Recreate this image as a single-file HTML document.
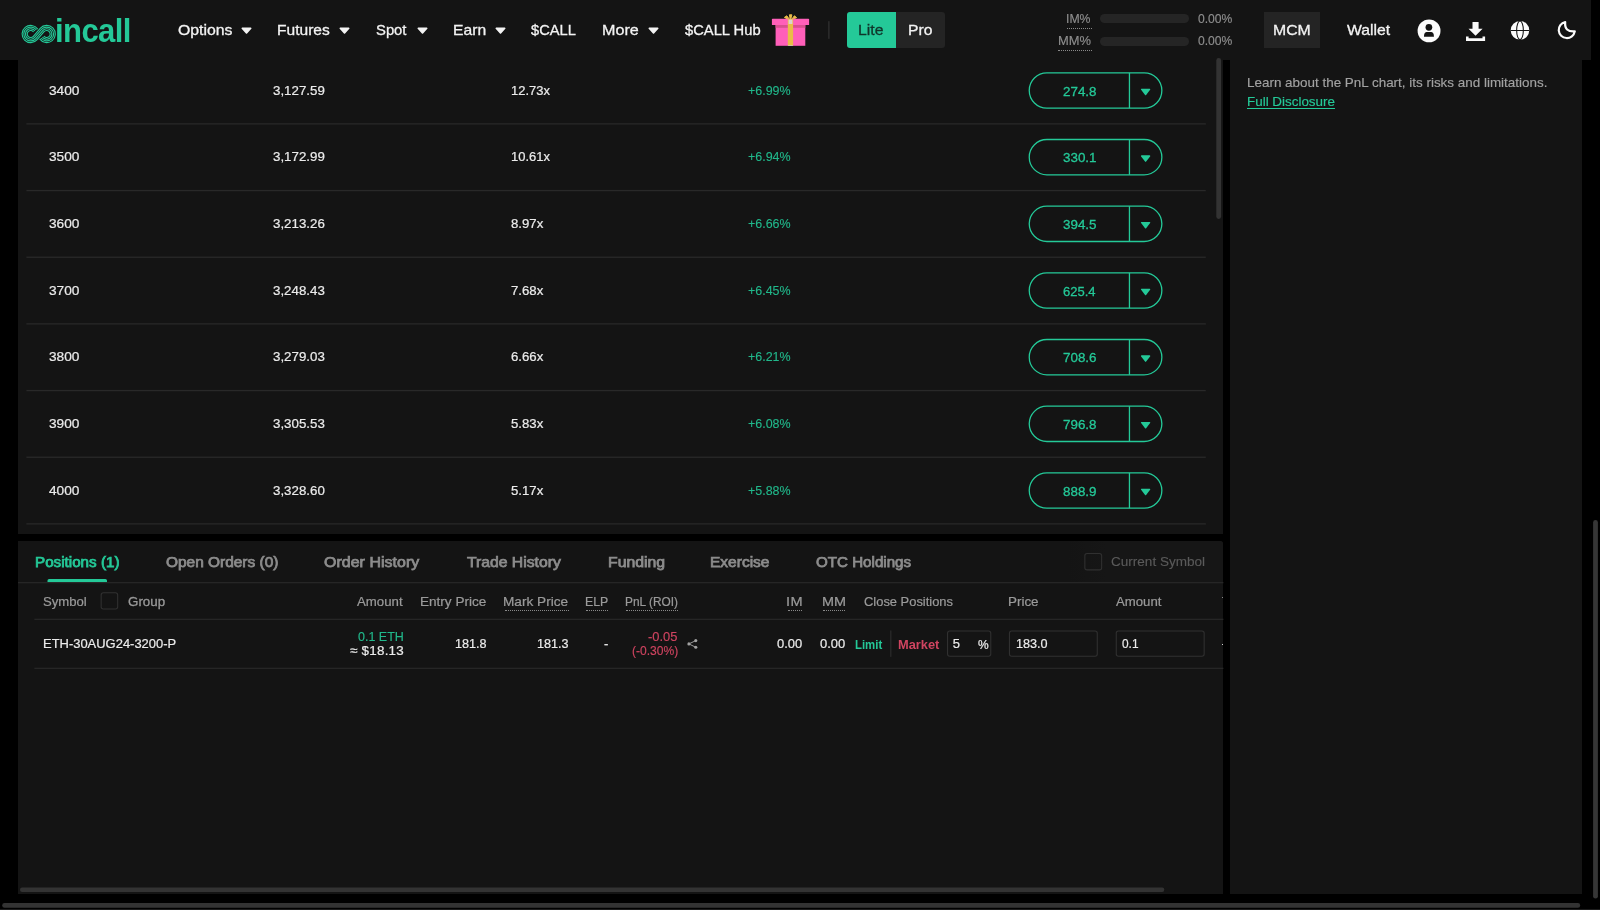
<!DOCTYPE html>
<html lang="en">
<head>
<meta charset="utf-8">
<title>Coincall</title>
<style>
*{box-sizing:border-box;margin:0;padding:0}
html,body{width:1600px;height:910px;overflow:hidden;background:#000}
body{position:relative;font-family:"Liberation Sans",sans-serif}
.a{position:absolute}
.t{position:absolute;white-space:nowrap;height:20px;line-height:20px;font-family:"Liberation Sans",sans-serif}
.p{position:absolute;background:#141414}
.tri{position:absolute;width:11px;height:7px}
.dot{position:absolute;height:0;border-top:1px dotted #8a8a8a}
</style>
</head>
<body>
<div class="p" style="left:0;top:0;width:1591.4px;height:59.8px"></div>
<div class="p" style="left:18px;top:59.8px;width:1205.4px;height:474.2px"></div>
<div class="p" style="left:18px;top:541px;width:1205.4px;height:352.8px;border-radius:0 3px 0 0"></div>
<div class="p" style="left:1230.2px;top:59.8px;width:351.8px;height:834px"></div>
<div class="a" style="left:1068px;top:541px;width:155.4px;height:41.5px;border-radius:0 3px 0 0;background:linear-gradient(90deg,#141414,#161616 25%)"></div>
<svg class="a" style="left:18px;top:20px" width="42" height="28" viewBox="0 0 42 28" fill="none" stroke="#24c998" stroke-width="1.12"><path d="M15.57 11.99A3.50 3.50 0 1 0 15.35 16.29L22.20 8.37A8.60 8.60 0 1 1 21.66 18.93"/><path d="M16.96 11.02A5.20 5.20 0 1 0 16.63 17.40L23.48 9.49A6.90 6.90 0 1 1 23.05 17.96"/><path d="M18.35 10.04A6.90 6.90 0 1 0 17.92 18.51L24.77 10.60A5.20 5.20 0 1 1 24.44 16.98"/><path d="M19.74 9.07A8.60 8.60 0 1 0 19.20 19.63L26.05 11.71A3.50 3.50 0 1 1 25.83 16.01"/></svg>
<svg class="tri" style="left:240.8px;top:27px" viewBox="0 0 11 7"><path d="M1.2 .5h8.6a.7.7 0 0 1 .55 1.15L6.1 6.5a.8.8 0 0 1-1.2 0L.65 1.65A.7.7 0 0 1 1.2.5z" fill="#f3f3f3"/></svg>
<svg class="tri" style="left:338.6px;top:27px" viewBox="0 0 11 7"><path d="M1.2 .5h8.6a.7.7 0 0 1 .55 1.15L6.1 6.5a.8.8 0 0 1-1.2 0L.65 1.65A.7.7 0 0 1 1.2.5z" fill="#f3f3f3"/></svg>
<svg class="tri" style="left:417px;top:27px" viewBox="0 0 11 7"><path d="M1.2 .5h8.6a.7.7 0 0 1 .55 1.15L6.1 6.5a.8.8 0 0 1-1.2 0L.65 1.65A.7.7 0 0 1 1.2.5z" fill="#f3f3f3"/></svg>
<svg class="tri" style="left:495.3px;top:27px" viewBox="0 0 11 7"><path d="M1.2 .5h8.6a.7.7 0 0 1 .55 1.15L6.1 6.5a.8.8 0 0 1-1.2 0L.65 1.65A.7.7 0 0 1 1.2.5z" fill="#f3f3f3"/></svg>
<svg class="tri" style="left:647.6px;top:27px" viewBox="0 0 11 7"><path d="M1.2 .5h8.6a.7.7 0 0 1 .55 1.15L6.1 6.5a.8.8 0 0 1-1.2 0L.65 1.65A.7.7 0 0 1 1.2.5z" fill="#f3f3f3"/></svg>
<svg class="a" style="left:770px;top:12px" width="41" height="36" viewBox="0 0 41 36">
<path d="M20.2 8.4 L14.4 5.4 L16.8 3.8 Z M20.4 8.4 L19.4 2.8 L21.9 2.8 Z M20.8 8.4 L24.4 3.8 L26.6 5.6 Z" fill="#e9bd48" stroke="#e9bd48" stroke-width="1" stroke-linejoin="round"/>
<rect x="5.6" y="13" width="29.7" height="20.8" fill="#ff5fb9"/>
<rect x="5.6" y="13" width="29.7" height="2.8" fill="#d8508f"/>
<rect x="1.9" y="6.8" width="37.2" height="6.3" rx=".6" fill="#ff5fb9"/>
<rect x="17.8" y="6.8" width="5.3" height="27" fill="#e9bd48"/>
<rect x="18.6" y="7.6" width="3.8" height="4.4" fill="#d9d3cf"/>
<rect x="18.2" y="33" width="4.6" height="1" fill="#cfc3a0"/>
</svg>
<div class="a" style="left:846.9px;top:11.9px;width:98.2px;height:35.9px;border-radius:3px;background:#242424;overflow:hidden"><div style="width:49.2px;height:100%;background:#24c998"></div></div>
<div class="a" style="left:1099.7px;top:14.4px;width:89.2px;height:9px;border-radius:5px;background:#252525"></div>
<div class="a" style="left:1099.7px;top:36.8px;width:89.2px;height:9px;border-radius:5px;background:#252525"></div>
<div class="dot" style="left:1066.5px;top:28px;width:25px"></div>
<div class="dot" style="left:1058px;top:50px;width:33.5px"></div>
<div class="a" style="left:1264.3px;top:12.1px;width:55.7px;height:35.7px;background:#242424"></div>
<svg class="a" style="left:1417px;top:19px" width="24" height="24" viewBox="0 0 24 24"><circle cx="12.05" cy="11.9" r="11.45" fill="#fcfcfc"/><circle cx="11.9" cy="8.3" r="3.35" fill="#141414"/><path d="M7 17.8v-.9c0-2.2 1.3-3.8 2.7-3.8h4.5c1.4 0 2.7 1.6 2.7 3.8v.9z" fill="#141414"/></svg>
<svg class="a" style="left:1465px;top:21px" width="21" height="21" viewBox="0 0 21 21" fill="#fbfbfb"><path d="M7.5 .9h6.1v6.8h4L10.55 14.7 3.5 7.7h4z"/><path d="M1 15.4h2.6v1.8h13.9v-1.8h2.6V20H1z"/></svg>
<svg class="a" style="left:1510px;top:20px" width="20" height="21" viewBox="0 0 20 21"><circle cx="10" cy="10.3" r="9.3" fill="#fcfcfc"/><g fill="none" stroke="#141414"><path d="M.5 10.5h19" stroke-width="1"/><ellipse cx="10" cy="10.3" rx="3.35" ry="9.3" stroke-width="1.05"/></g></svg>
<svg class="a" style="left:1556px;top:20px" width="22" height="21" viewBox="0 0 22 21"><path d="M9.2 2Q8.2 12.2 18.8 11.4A8.1 8.1 0 1 1 9.2 2z" fill="none" stroke="#fcfcfc" stroke-width="2.2" stroke-linejoin="round"/></svg>
<svg class="a" style="left:0;top:0" width="1600" height="910" viewBox="0 0 1600 910"><rect x="26.4" y="123.25" width="1179.4" height="1.3" fill="#292929"/><rect x="1029.25" y="72.85" width="132.6" height="35.3" rx="17.65" fill="none" stroke="#24c998" stroke-width="1.3"/><rect x="1128.8" y="72.85" width="1.3" height="35.3" fill="#24c998"/><path transform="translate(1140.6 88.35)" d="M1 .3h8a.65.65 0 0 1 .5 1.1L5.55 6.6a.75.75 0 0 1-1.1 0L.5 1.4A.65.65 0 0 1 1 .3z" fill="#24c998"/><rect x="26.4" y="189.92" width="1179.4" height="1.3" fill="#292929"/><rect x="1029.25" y="139.52" width="132.6" height="35.3" rx="17.65" fill="none" stroke="#24c998" stroke-width="1.3"/><rect x="1128.8" y="139.52" width="1.3" height="35.3" fill="#24c998"/><path transform="translate(1140.6 155.02)" d="M1 .3h8a.65.65 0 0 1 .5 1.1L5.55 6.6a.75.75 0 0 1-1.1 0L.5 1.4A.65.65 0 0 1 1 .3z" fill="#24c998"/><rect x="26.4" y="256.58" width="1179.4" height="1.3" fill="#292929"/><rect x="1029.25" y="206.18" width="132.6" height="35.3" rx="17.65" fill="none" stroke="#24c998" stroke-width="1.3"/><rect x="1128.8" y="206.18" width="1.3" height="35.3" fill="#24c998"/><path transform="translate(1140.6 221.68)" d="M1 .3h8a.65.65 0 0 1 .5 1.1L5.55 6.6a.75.75 0 0 1-1.1 0L.5 1.4A.65.65 0 0 1 1 .3z" fill="#24c998"/><rect x="26.4" y="323.25" width="1179.4" height="1.3" fill="#292929"/><rect x="1029.25" y="272.85" width="132.6" height="35.3" rx="17.65" fill="none" stroke="#24c998" stroke-width="1.3"/><rect x="1128.8" y="272.85" width="1.3" height="35.3" fill="#24c998"/><path transform="translate(1140.6 288.35)" d="M1 .3h8a.65.65 0 0 1 .5 1.1L5.55 6.6a.75.75 0 0 1-1.1 0L.5 1.4A.65.65 0 0 1 1 .3z" fill="#24c998"/><rect x="26.4" y="389.92" width="1179.4" height="1.3" fill="#292929"/><rect x="1029.25" y="339.52" width="132.6" height="35.3" rx="17.65" fill="none" stroke="#24c998" stroke-width="1.3"/><rect x="1128.8" y="339.52" width="1.3" height="35.3" fill="#24c998"/><path transform="translate(1140.6 355.02)" d="M1 .3h8a.65.65 0 0 1 .5 1.1L5.55 6.6a.75.75 0 0 1-1.1 0L.5 1.4A.65.65 0 0 1 1 .3z" fill="#24c998"/><rect x="26.4" y="456.58" width="1179.4" height="1.3" fill="#292929"/><rect x="1029.25" y="406.18" width="132.6" height="35.3" rx="17.65" fill="none" stroke="#24c998" stroke-width="1.3"/><rect x="1128.8" y="406.18" width="1.3" height="35.3" fill="#24c998"/><path transform="translate(1140.6 421.68)" d="M1 .3h8a.65.65 0 0 1 .5 1.1L5.55 6.6a.75.75 0 0 1-1.1 0L.5 1.4A.65.65 0 0 1 1 .3z" fill="#24c998"/><rect x="26.4" y="523.25" width="1179.4" height="1.3" fill="#292929"/><rect x="1029.25" y="472.85" width="132.6" height="35.3" rx="17.65" fill="none" stroke="#24c998" stroke-width="1.3"/><rect x="1128.8" y="472.85" width="1.3" height="35.3" fill="#24c998"/><path transform="translate(1140.6 488.35)" d="M1 .3h8a.65.65 0 0 1 .5 1.1L5.55 6.6a.75.75 0 0 1-1.1 0L.5 1.4A.65.65 0 0 1 1 .3z" fill="#24c998"/><rect x="1216.3" y="58" width="4.8" height="161" rx="2.4" fill="#333333"/><rect x="1593.1" y="520" width="4.8" height="378.6" rx="2.4" fill="#363636"/><rect x="20" y="887.6" width="1144.3" height="4.4" rx="2.2" fill="#333333"/><rect x="2.2" y="903.1" width="1578" height="4.7" rx="2.35" fill="#333333"/><rect x="0" y="909" width="1600" height="1" fill="#1c1c1c"/><path d="M47.5 582.2v-1.6a1.6 1.6 0 0 1 1.6-1.6h56.3a1.6 1.6 0 0 1 1.6 1.6v1.6z" fill="#24c998"/><rect x="18" y="582.1" width="1205.4" height="1.2" fill="#292929"/><rect x="34.4" y="618.7" width="1189" height="1.2" fill="#292929"/><rect x="34.4" y="667.7" width="1189" height="1.2" fill="#292929"/><rect x="1084.85" y="553.55" width="16.80" height="16.30" rx="2.2" fill="none" stroke="#303030" stroke-width="1.1"/><rect x="101.15" y="592.75" width="16.50" height="16.30" rx="2.2" fill="none" stroke="#303030" stroke-width="1.1"/><rect x="947.55" y="631.05" width="43.20" height="25.20" rx="2.2" fill="none" stroke="#303030" stroke-width="1.1"/><rect x="1009.45" y="631.05" width="87.80" height="25.20" rx="2.2" fill="none" stroke="#303030" stroke-width="1.1"/><rect x="1116.25" y="631.05" width="87.90" height="25.20" rx="2.2" fill="none" stroke="#303030" stroke-width="1.1"/><rect x="890.2" y="630.5" width="1.2" height="26.3" fill="#2c2c2c"/><rect x="828.2" y="21.2" width="1.3" height="17.6" fill="#303030"/></svg>
<div class="dot" style="left:504.5px;top:610.4px;width:64px"></div>
<div class="dot" style="left:586.3px;top:610.4px;width:22px"></div>
<div class="dot" style="left:625.8px;top:610.4px;width:52.5px"></div>
<div class="dot" style="left:787.5px;top:610.4px;width:14.5px"></div>
<div class="dot" style="left:823px;top:610.4px;width:22px"></div>
<svg class="a" style="left:687px;top:638px" width="12" height="12" viewBox="0 0 12 12"><g fill="#a2a2a2"><circle cx="8.8" cy="2.6" r="1.55"/><circle cx="8.8" cy="9.3" r="1.55"/><circle cx="1.9" cy="5.9" r="1.55"/></g><path d="M8.8 2.6 1.9 5.9 8.8 9.3" fill="none" stroke="#a2a2a2" stroke-width=".95"/></svg>
<div class="a" style="left:1221.6px;top:596.6px;width:1.8px;height:1.2px;background:#8a8a8a"></div>
<div class="a" style="left:1221.6px;top:643.6px;width:1.8px;height:1.2px;background:#cfcfcf"></div>
<div class="a" style="left:0;top:0;width:1600px;height:910px;will-change:transform">
<span class="t" style="left:55.04px;top:21.13px;font-size:33.4px;color:#24c998;letter-spacing:-0.627px;font-weight:700;transform:scaleX(0.93);transform-origin:0 0;">incall</span>
<span class="t" style="left:178.00px;top:20.10px;font-size:15px;color:#f3f3f3;-webkit-text-stroke:0.3px #f3f3f3;transform:scaleX(1.0548);transform-origin:0 0;">Options</span>
<span class="t" style="left:277.36px;top:20.10px;font-size:15px;color:#f3f3f3;-webkit-text-stroke:0.3px #f3f3f3;transform:scaleX(1.0374);transform-origin:0 0;">Futures</span>
<span class="t" style="left:376.00px;top:20.10px;font-size:15px;color:#f3f3f3;-webkit-text-stroke:0.3px #f3f3f3;transform:scaleX(0.9877);transform-origin:0 0;">Spot</span>
<span class="t" style="left:452.76px;top:20.10px;font-size:15px;color:#f3f3f3;-webkit-text-stroke:0.3px #f3f3f3;transform:scaleX(1.0447);transform-origin:0 0;">Earn</span>
<span class="t" style="left:531.30px;top:20.10px;font-size:15px;color:#f3f3f3;-webkit-text-stroke:0.3px #f3f3f3;transform:scaleX(0.9775);transform-origin:0 0;">$CALL</span>
<span class="t" style="left:601.92px;top:20.10px;font-size:15px;color:#f3f3f3;-webkit-text-stroke:0.3px #f3f3f3;transform:scaleX(1.0752);transform-origin:0 0;">More</span>
<span class="t" style="left:685.00px;top:20.10px;font-size:15px;color:#f3f3f3;-webkit-text-stroke:0.3px #f3f3f3;transform:scaleX(0.9818);transform-origin:0 0;">$CALL Hub</span>
<span class="t" style="left:858.45px;top:20.10px;font-size:15px;color:#10352a;-webkit-text-stroke:0.3px #10352a;transform:scaleX(1.0507);transform-origin:0 0;">Lite</span>
<span class="t" style="left:908.45px;top:20.10px;font-size:15px;color:#f3f3f3;-webkit-text-stroke:0.3px #f3f3f3;transform:scaleX(1.0455);transform-origin:0 0;">Pro</span>
<span class="t" style="left:1066.06px;top:9.30px;font-size:13px;color:#8e8e8e;-webkit-text-stroke:0.15px #8e8e8e;transform:scaleX(0.9434);transform-origin:0 0;">IM%</span>
<span class="t" style="left:1057.50px;top:30.90px;font-size:13px;color:#8e8e8e;-webkit-text-stroke:0.15px #8e8e8e;transform:scaleX(0.9952);transform-origin:0 0;">MM%</span>
<span class="t" style="left:1198.00px;top:9.30px;font-size:13px;color:#8e8e8e;-webkit-text-stroke:0.15px #8e8e8e;transform:scaleX(0.9329);transform-origin:0 0;">0.00%</span>
<span class="t" style="left:1198.00px;top:30.90px;font-size:13px;color:#8e8e8e;-webkit-text-stroke:0.15px #8e8e8e;transform:scaleX(0.9329);transform-origin:0 0;">0.00%</span>
<span class="t" style="left:1273.35px;top:20.20px;font-size:15px;color:#f3f3f3;-webkit-text-stroke:0.3px #f3f3f3;transform:scaleX(1.0545);transform-origin:0 0;">MCM</span>
<span class="t" style="left:1347.00px;top:20.20px;font-size:15px;color:#f3f3f3;-webkit-text-stroke:0.3px #f3f3f3;transform:scaleX(1.0489);transform-origin:0 0;">Wallet</span>
<span class="t" style="left:48.80px;top:80.72px;font-size:13.5px;color:#ebebeb;-webkit-text-stroke:0.22px #ebebeb;transform:scaleX(1.0127);transform-origin:0 0;">3400</span>
<span class="t" style="left:272.80px;top:80.72px;font-size:13.5px;color:#ebebeb;-webkit-text-stroke:0.22px #ebebeb;transform:scaleX(0.9857);transform-origin:0 0;">3,127.59</span>
<span class="t" style="left:511.04px;top:80.72px;font-size:13.5px;color:#ebebeb;-webkit-text-stroke:0.22px #ebebeb;transform:scaleX(0.9602);transform-origin:0 0;">12.73x</span>
<span class="t" style="left:748.40px;top:80.72px;font-size:13.5px;color:#21b88b;-webkit-text-stroke:0.12px #21b88b;transform:scaleX(0.9229);transform-origin:0 0;">+6.99%</span>
<span class="t" style="left:1063.00px;top:81.52px;font-size:13.5px;color:#24c998;-webkit-text-stroke:0.3px #24c998;transform:scaleX(0.9917);transform-origin:0 0;">274.8</span>
<span class="t" style="left:48.80px;top:147.39px;font-size:13.5px;color:#ebebeb;-webkit-text-stroke:0.22px #ebebeb;transform:scaleX(1.0127);transform-origin:0 0;">3500</span>
<span class="t" style="left:272.80px;top:147.39px;font-size:13.5px;color:#ebebeb;-webkit-text-stroke:0.22px #ebebeb;transform:scaleX(0.9857);transform-origin:0 0;">3,172.99</span>
<span class="t" style="left:511.04px;top:147.39px;font-size:13.5px;color:#ebebeb;-webkit-text-stroke:0.22px #ebebeb;transform:scaleX(0.9602);transform-origin:0 0;">10.61x</span>
<span class="t" style="left:748.40px;top:147.39px;font-size:13.5px;color:#21b88b;-webkit-text-stroke:0.12px #21b88b;transform:scaleX(0.9229);transform-origin:0 0;">+6.94%</span>
<span class="t" style="left:1063.00px;top:148.19px;font-size:13.5px;color:#24c998;-webkit-text-stroke:0.3px #24c998;transform:scaleX(0.9917);transform-origin:0 0;">330.1</span>
<span class="t" style="left:48.80px;top:214.06px;font-size:13.5px;color:#ebebeb;-webkit-text-stroke:0.22px #ebebeb;transform:scaleX(1.0127);transform-origin:0 0;">3600</span>
<span class="t" style="left:272.80px;top:214.06px;font-size:13.5px;color:#ebebeb;-webkit-text-stroke:0.22px #ebebeb;transform:scaleX(0.9857);transform-origin:0 0;">3,213.26</span>
<span class="t" style="left:510.80px;top:214.06px;font-size:13.5px;color:#ebebeb;-webkit-text-stroke:0.22px #ebebeb;transform:scaleX(0.9767);transform-origin:0 0;">8.97x</span>
<span class="t" style="left:748.40px;top:214.06px;font-size:13.5px;color:#21b88b;-webkit-text-stroke:0.12px #21b88b;transform:scaleX(0.9229);transform-origin:0 0;">+6.66%</span>
<span class="t" style="left:1063.00px;top:214.86px;font-size:13.5px;color:#24c998;-webkit-text-stroke:0.3px #24c998;transform:scaleX(0.9917);transform-origin:0 0;">394.5</span>
<span class="t" style="left:48.80px;top:280.72px;font-size:13.5px;color:#ebebeb;-webkit-text-stroke:0.22px #ebebeb;transform:scaleX(1.0127);transform-origin:0 0;">3700</span>
<span class="t" style="left:272.80px;top:280.72px;font-size:13.5px;color:#ebebeb;-webkit-text-stroke:0.22px #ebebeb;transform:scaleX(0.9857);transform-origin:0 0;">3,248.43</span>
<span class="t" style="left:510.80px;top:280.72px;font-size:13.5px;color:#ebebeb;-webkit-text-stroke:0.22px #ebebeb;transform:scaleX(0.9767);transform-origin:0 0;">7.68x</span>
<span class="t" style="left:748.40px;top:280.72px;font-size:13.5px;color:#21b88b;-webkit-text-stroke:0.12px #21b88b;transform:scaleX(0.9229);transform-origin:0 0;">+6.45%</span>
<span class="t" style="left:1063.00px;top:281.52px;font-size:13.5px;color:#24c998;-webkit-text-stroke:0.3px #24c998;transform:scaleX(0.9628);transform-origin:0 0;">625.4</span>
<span class="t" style="left:48.80px;top:347.39px;font-size:13.5px;color:#ebebeb;-webkit-text-stroke:0.22px #ebebeb;transform:scaleX(1.0127);transform-origin:0 0;">3800</span>
<span class="t" style="left:272.80px;top:347.39px;font-size:13.5px;color:#ebebeb;-webkit-text-stroke:0.22px #ebebeb;transform:scaleX(0.9857);transform-origin:0 0;">3,279.03</span>
<span class="t" style="left:510.80px;top:347.39px;font-size:13.5px;color:#ebebeb;-webkit-text-stroke:0.22px #ebebeb;transform:scaleX(0.9767);transform-origin:0 0;">6.66x</span>
<span class="t" style="left:748.40px;top:347.39px;font-size:13.5px;color:#21b88b;-webkit-text-stroke:0.12px #21b88b;transform:scaleX(0.9229);transform-origin:0 0;">+6.21%</span>
<span class="t" style="left:1063.00px;top:348.19px;font-size:13.5px;color:#24c998;-webkit-text-stroke:0.3px #24c998;transform:scaleX(0.9917);transform-origin:0 0;">708.6</span>
<span class="t" style="left:48.80px;top:414.06px;font-size:13.5px;color:#ebebeb;-webkit-text-stroke:0.22px #ebebeb;transform:scaleX(1.0127);transform-origin:0 0;">3900</span>
<span class="t" style="left:272.80px;top:414.06px;font-size:13.5px;color:#ebebeb;-webkit-text-stroke:0.22px #ebebeb;transform:scaleX(0.9857);transform-origin:0 0;">3,305.53</span>
<span class="t" style="left:510.80px;top:414.06px;font-size:13.5px;color:#ebebeb;-webkit-text-stroke:0.22px #ebebeb;transform:scaleX(0.9767);transform-origin:0 0;">5.83x</span>
<span class="t" style="left:748.40px;top:414.06px;font-size:13.5px;color:#21b88b;-webkit-text-stroke:0.12px #21b88b;transform:scaleX(0.9229);transform-origin:0 0;">+6.08%</span>
<span class="t" style="left:1063.00px;top:414.86px;font-size:13.5px;color:#24c998;-webkit-text-stroke:0.3px #24c998;transform:scaleX(0.9917);transform-origin:0 0;">796.8</span>
<span class="t" style="left:48.80px;top:480.72px;font-size:13.5px;color:#ebebeb;-webkit-text-stroke:0.22px #ebebeb;transform:scaleX(1.0127);transform-origin:0 0;">4000</span>
<span class="t" style="left:272.80px;top:480.72px;font-size:13.5px;color:#ebebeb;-webkit-text-stroke:0.22px #ebebeb;transform:scaleX(0.9857);transform-origin:0 0;">3,328.60</span>
<span class="t" style="left:510.80px;top:480.72px;font-size:13.5px;color:#ebebeb;-webkit-text-stroke:0.22px #ebebeb;transform:scaleX(0.9767);transform-origin:0 0;">5.17x</span>
<span class="t" style="left:748.40px;top:480.72px;font-size:13.5px;color:#21b88b;-webkit-text-stroke:0.12px #21b88b;transform:scaleX(0.9229);transform-origin:0 0;">+5.88%</span>
<span class="t" style="left:1063.00px;top:481.52px;font-size:13.5px;color:#24c998;-webkit-text-stroke:0.3px #24c998;transform:scaleX(0.9917);transform-origin:0 0;">888.9</span>
<span class="t" style="left:1246.97px;top:72.70px;font-size:13px;color:#a2a2a2;-webkit-text-stroke:0.15px #a2a2a2;transform:scaleX(1.0332);transform-origin:0 0;">Learn about the PnL chart, its risks and limitations.</span>
<span class="t" style="left:1246.97px;top:92.30px;font-size:13px;color:#24c998;-webkit-text-stroke:0.15px #24c998;transform:scaleX(1.032);transform-origin:0 0;text-decoration:underline;text-underline-offset:1.5px;text-decoration-thickness:1px;">Full Disclosure</span>
<span class="t" style="left:34.93px;top:551.98px;font-size:14.2px;color:#24c998;-webkit-text-stroke:0.75px #24c998;transform:scaleX(1.071);transform-origin:0 0;">Positions (1)</span>
<span class="t" style="left:165.60px;top:551.98px;font-size:14.2px;color:#8c8c8c;-webkit-text-stroke:0.75px #8c8c8c;transform:scaleX(1.0881);transform-origin:0 0;">Open Orders (0)</span>
<span class="t" style="left:323.80px;top:551.98px;font-size:14.2px;color:#8c8c8c;letter-spacing:0.053px;-webkit-text-stroke:0.75px #8c8c8c;transform:scaleX(1.12);transform-origin:0 0;">Order History</span>
<span class="t" style="left:467.00px;top:551.98px;font-size:14.2px;color:#8c8c8c;-webkit-text-stroke:0.75px #8c8c8c;transform:scaleX(1.1084);transform-origin:0 0;">Trade History</span>
<span class="t" style="left:608.19px;top:551.98px;font-size:14.2px;color:#8c8c8c;-webkit-text-stroke:0.75px #8c8c8c;transform:scaleX(1.1138);transform-origin:0 0;">Funding</span>
<span class="t" style="left:709.71px;top:551.98px;font-size:14.2px;color:#8c8c8c;-webkit-text-stroke:0.75px #8c8c8c;transform:scaleX(1.0932);transform-origin:0 0;">Exercise</span>
<span class="t" style="left:816.30px;top:551.98px;font-size:14.2px;color:#8c8c8c;-webkit-text-stroke:0.75px #8c8c8c;transform:scaleX(1.0674);transform-origin:0 0;">OTC Holdings</span>
<span class="t" style="left:1111.30px;top:551.90px;font-size:13px;color:#5a5a5a;-webkit-text-stroke:0.12px #5a5a5a;transform:scaleX(1.0418);transform-origin:0 0;">Current Symbol</span>
<span class="t" style="left:43.40px;top:591.50px;font-size:13px;color:#9a9a9a;-webkit-text-stroke:0.22px #9a9a9a;transform:scaleX(1.0101);transform-origin:0 0;">Symbol</span>
<span class="t" style="left:127.80px;top:591.50px;font-size:13px;color:#9a9a9a;-webkit-text-stroke:0.3px #9a9a9a;transform:scaleX(1.0278);transform-origin:0 0;">Group</span>
<span class="t" style="left:357.00px;top:591.50px;font-size:13px;color:#9a9a9a;-webkit-text-stroke:0.22px #9a9a9a;transform:scaleX(1.0179);transform-origin:0 0;">Amount</span>
<span class="t" style="left:420.26px;top:591.50px;font-size:13px;color:#9a9a9a;-webkit-text-stroke:0.22px #9a9a9a;transform:scaleX(1.0426);transform-origin:0 0;">Entry Price</span>
<span class="t" style="left:503.45px;top:591.50px;font-size:13px;color:#9a9a9a;-webkit-text-stroke:0.22px #9a9a9a;transform:scaleX(1.0478);transform-origin:0 0;">Mark Price</span>
<span class="t" style="left:585.35px;top:591.50px;font-size:13px;color:#9a9a9a;-webkit-text-stroke:0.22px #9a9a9a;transform:scaleX(0.9476);transform-origin:0 0;">ELP</span>
<span class="t" style="left:624.89px;top:591.50px;font-size:13px;color:#9a9a9a;-webkit-text-stroke:0.22px #9a9a9a;transform:scaleX(0.9128);transform-origin:0 0;">PnL (ROI)</span>
<span class="t" style="left:786.38px;top:591.50px;font-size:13px;color:#9a9a9a;letter-spacing:0.335px;-webkit-text-stroke:0.22px #9a9a9a;transform:scaleX(1.12);transform-origin:0 0;">IM</span>
<span class="t" style="left:821.89px;top:591.50px;font-size:13px;color:#9a9a9a;-webkit-text-stroke:0.22px #9a9a9a;transform:scaleX(1.1095);transform-origin:0 0;">MM</span>
<span class="t" style="left:863.80px;top:591.50px;font-size:13px;color:#9a9a9a;-webkit-text-stroke:0.22px #9a9a9a;transform:scaleX(0.9934);transform-origin:0 0;">Close Positions</span>
<span class="t" style="left:1008.47px;top:591.50px;font-size:13px;color:#9a9a9a;-webkit-text-stroke:0.22px #9a9a9a;transform:scaleX(1.0321);transform-origin:0 0;">Price</span>
<span class="t" style="left:1116.20px;top:591.50px;font-size:13px;color:#9a9a9a;-webkit-text-stroke:0.22px #9a9a9a;transform:scaleX(1.0135);transform-origin:0 0;">Amount</span>
<span class="t" style="left:42.50px;top:634.40px;font-size:13px;color:#ececec;-webkit-text-stroke:0.2px #ececec;transform:scaleX(0.9962);transform-origin:0 0;">ETH-30AUG24-3200-P</span>
<span class="t" style="left:357.50px;top:626.90px;font-size:13px;color:#21b88b;-webkit-text-stroke:0.15px #21b88b;transform:scaleX(0.962);transform-origin:0 0;">0.1 ETH</span>
<span class="t" style="left:349.50px;top:640.70px;font-size:13px;color:#ececec;letter-spacing:0.238px;-webkit-text-stroke:0.2px #ececec;transform:scaleX(1.03);transform-origin:0 0;">≈ $18.13</span>
<span class="t" style="left:455.00px;top:634.40px;font-size:13px;color:#ececec;-webkit-text-stroke:0.2px #ececec;transform:scaleX(0.969);transform-origin:0 0;">181.8</span>
<span class="t" style="left:537.00px;top:634.40px;font-size:13px;color:#ececec;-webkit-text-stroke:0.2px #ececec;transform:scaleX(0.969);transform-origin:0 0;">181.3</span>
<span class="t" style="left:603.90px;top:634.40px;font-size:13px;color:#ececec;-webkit-text-stroke:0.2px #ececec;">-</span>
<span class="t" style="left:648.30px;top:626.90px;font-size:13px;color:#cf4460;-webkit-text-stroke:0.15px #cf4460;transform:scaleX(0.9932);transform-origin:0 0;">-0.05</span>
<span class="t" style="left:632.00px;top:640.50px;font-size:13px;color:#cf4460;-webkit-text-stroke:0.15px #cf4460;transform:scaleX(0.9289);transform-origin:0 0;">(-0.30%)</span>
<span class="t" style="left:777.00px;top:634.40px;font-size:13px;color:#ececec;-webkit-text-stroke:0.2px #ececec;transform:scaleX(0.9971);transform-origin:0 0;">0.00</span>
<span class="t" style="left:820.00px;top:634.40px;font-size:13px;color:#ececec;-webkit-text-stroke:0.2px #ececec;transform:scaleX(0.9971);transform-origin:0 0;">0.00</span>
<span class="t" style="left:855.20px;top:634.53px;font-size:12.6px;color:#24c998;font-weight:700;transform:scaleX(0.9032);transform-origin:0 0;">Limit</span>
<span class="t" style="left:898.10px;top:634.53px;font-size:12.6px;color:#cf4460;font-weight:700;transform:scaleX(1.0192);transform-origin:0 0;">Market</span>
<span class="t" style="left:952.65px;top:634.40px;font-size:13px;color:#ececec;-webkit-text-stroke:0.2px #ececec;">5</span>
<span class="t" style="left:977.90px;top:634.74px;font-size:12px;color:#ececec;-webkit-text-stroke:0.2px #ececec;">%</span>
<span class="t" style="left:1016.00px;top:634.40px;font-size:13px;color:#ececec;-webkit-text-stroke:0.2px #ececec;transform:scaleX(0.9721);transform-origin:0 0;">183.0</span>
<span class="t" style="left:1121.70px;top:634.40px;font-size:13px;color:#ececec;-webkit-text-stroke:0.2px #ececec;transform:scaleX(0.9136);transform-origin:0 0;">0.1</span>
</div>
</body>
</html>
